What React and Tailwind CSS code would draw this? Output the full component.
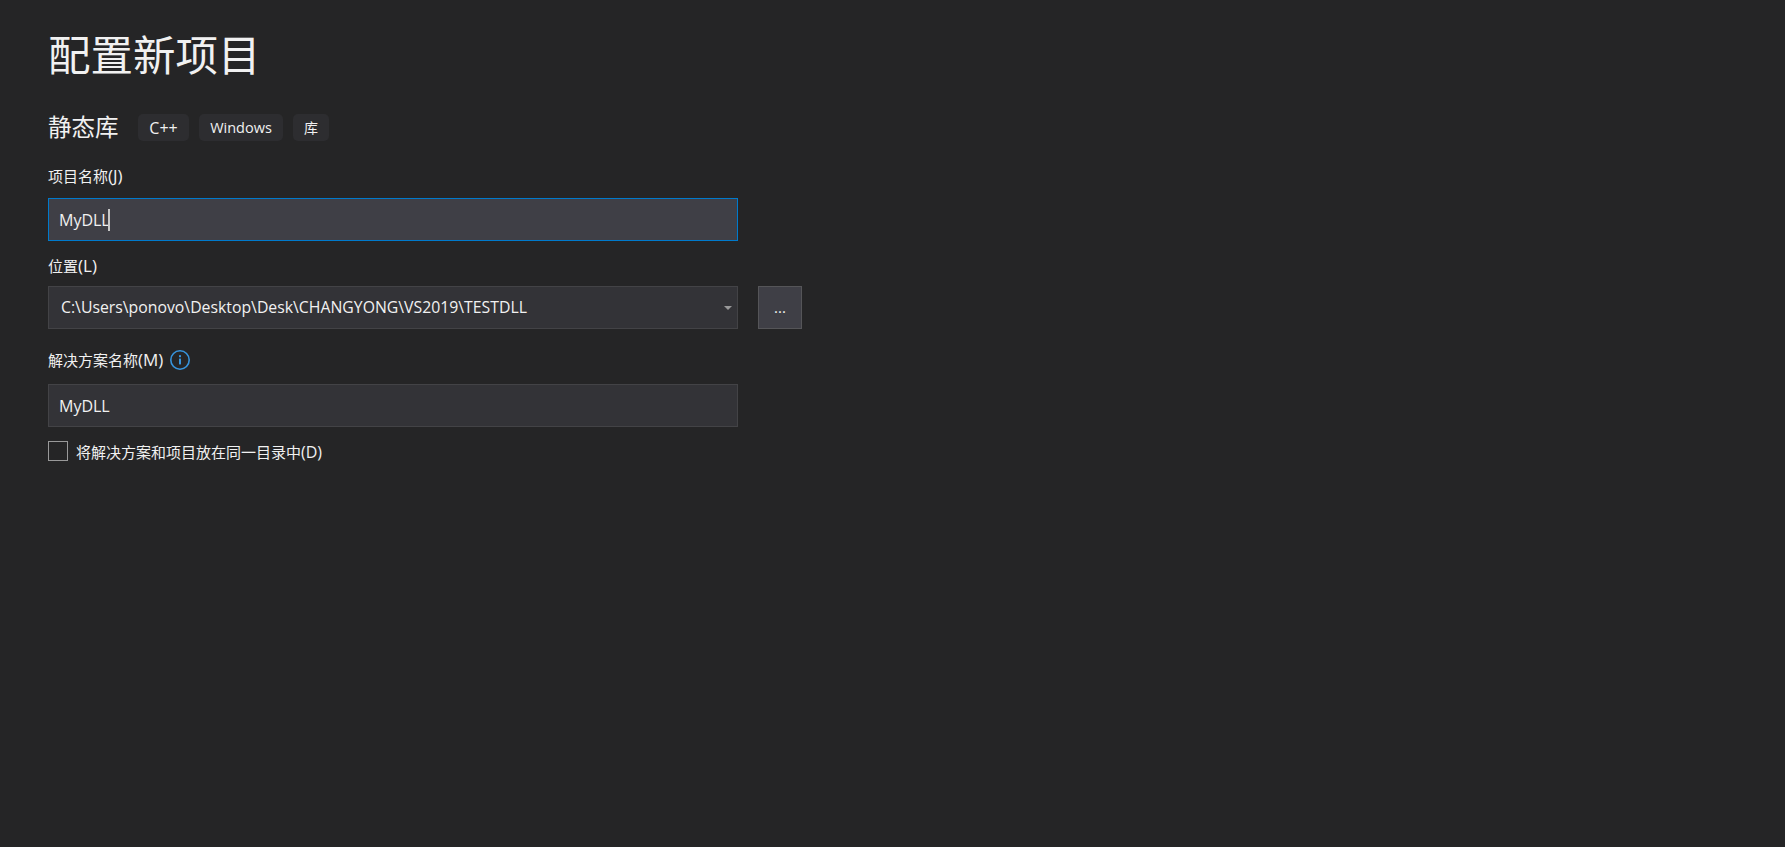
const font = { fontFamily: '"Open Sans", "Noto Sans CJK SC", sans-serif' };

function Tag({ children, className = "" }) {
  return (
    <span className={`flex h-[27px] items-center justify-center rounded-[5px] bg-[#2d2d30] text-[#f1f1f1] ${className}`}>
      {children}
    </span>
  );
}

function Label({ text, hint }) {
  return (
    <div className="text-[15px] leading-[20px] text-[#f1f1f1]">
      {text}
      <span className="text-[17px]">{hint}</span>
    </div>
  );
}

export default function App() {
  return (
    <div
      className="flex h-[847px] w-[1785px] flex-col overflow-hidden bg-[#252526] pl-[48px] pt-[26px]"
      style={font}
    >
      <h1 className="h-[58px] text-[42.5px] font-normal leading-[58px] text-[#f1f1f1]">配置新项目</h1>

      <div className="mt-[30px] flex h-[27px] items-center">
        <span className="w-[90px] text-[23.5px] leading-[27px] text-[#f1f1f1]">静态库</span>
        <div className="flex gap-[10px]">
          <Tag className="w-[51px] text-[16px]">C++</Tag>
          <Tag className="w-[84px] text-[14.5px]">Windows</Tag>
          <Tag className="w-[36px] text-[14px]">库</Tag>
        </div>
      </div>

      <div className="mt-[25px]">
        <Label text="项目名称" hint="(J)" />
      </div>
      <div className="mt-[12px] flex h-[43px] w-[690px] items-center border border-[#007acc] bg-[#3f3f46] pl-[10px] text-[16px] text-[#f1f1f1]">
        <span>MyDLL</span>
        <span className="ml-[-2px] h-[22px] w-[2px] bg-[#c8c8c8]" />
      </div>

      <div className="mt-[15px]">
        <Label text="位置" hint="(L)" />
      </div>
      <div className="mt-[10px] flex items-center gap-[20px]">
        <div className="flex h-[43px] w-[690px] items-center justify-between border border-[#434346] bg-[#333337] pl-[12px] pr-[4px] text-[15.8px] text-[#f1f1f1]">
          <span>C:\Users\ponovo\Desktop\Desk\CHANGYONG\VS2019\TESTDLL</span>
          <svg width="8" height="4" viewBox="0 0 8 4" className="mr-[1px]">
            <path d="M0 0H8L4 4Z" fill="#999999" />
          </svg>
        </div>
        <div className="flex h-[43px] w-[44px] items-center justify-center border border-[#555558] bg-[#3f3f46] text-[15px] text-[#f1f1f1]">
          ...
        </div>
      </div>

      <div className="mt-[18px] flex h-[26px] items-center gap-[7px]">
        <Label text="解决方案名称" hint="(M)" />
        <svg width="20" height="20" viewBox="0 0 20 20" fill="none">
          <circle cx="10" cy="10" r="9.2" stroke="#3794dc" strokeWidth="1.6" />
          <rect x="9" y="8.6" width="2" height="5.8" fill="#3794dc" />
          <rect x="9" y="5.2" width="2" height="2" fill="#3794dc" />
        </svg>
      </div>
      <div className="mt-[11px] flex h-[43px] w-[690px] items-center border border-[#434346] bg-[#333337] pl-[10px] text-[16px] text-[#f1f1f1]">
        MyDLL
      </div>

      <div className="mt-[14px] flex items-start gap-[8px]">
        <span className="h-[20px] w-[20px] border border-[#999999]" />
        <span className="mt-[1px] text-[15px] leading-[20px] text-[#f1f1f1]">
          将解决方案和项目放在同一目录中<span className="text-[16px]">(D)</span>
        </span>
      </div>
    </div>
  );
}
